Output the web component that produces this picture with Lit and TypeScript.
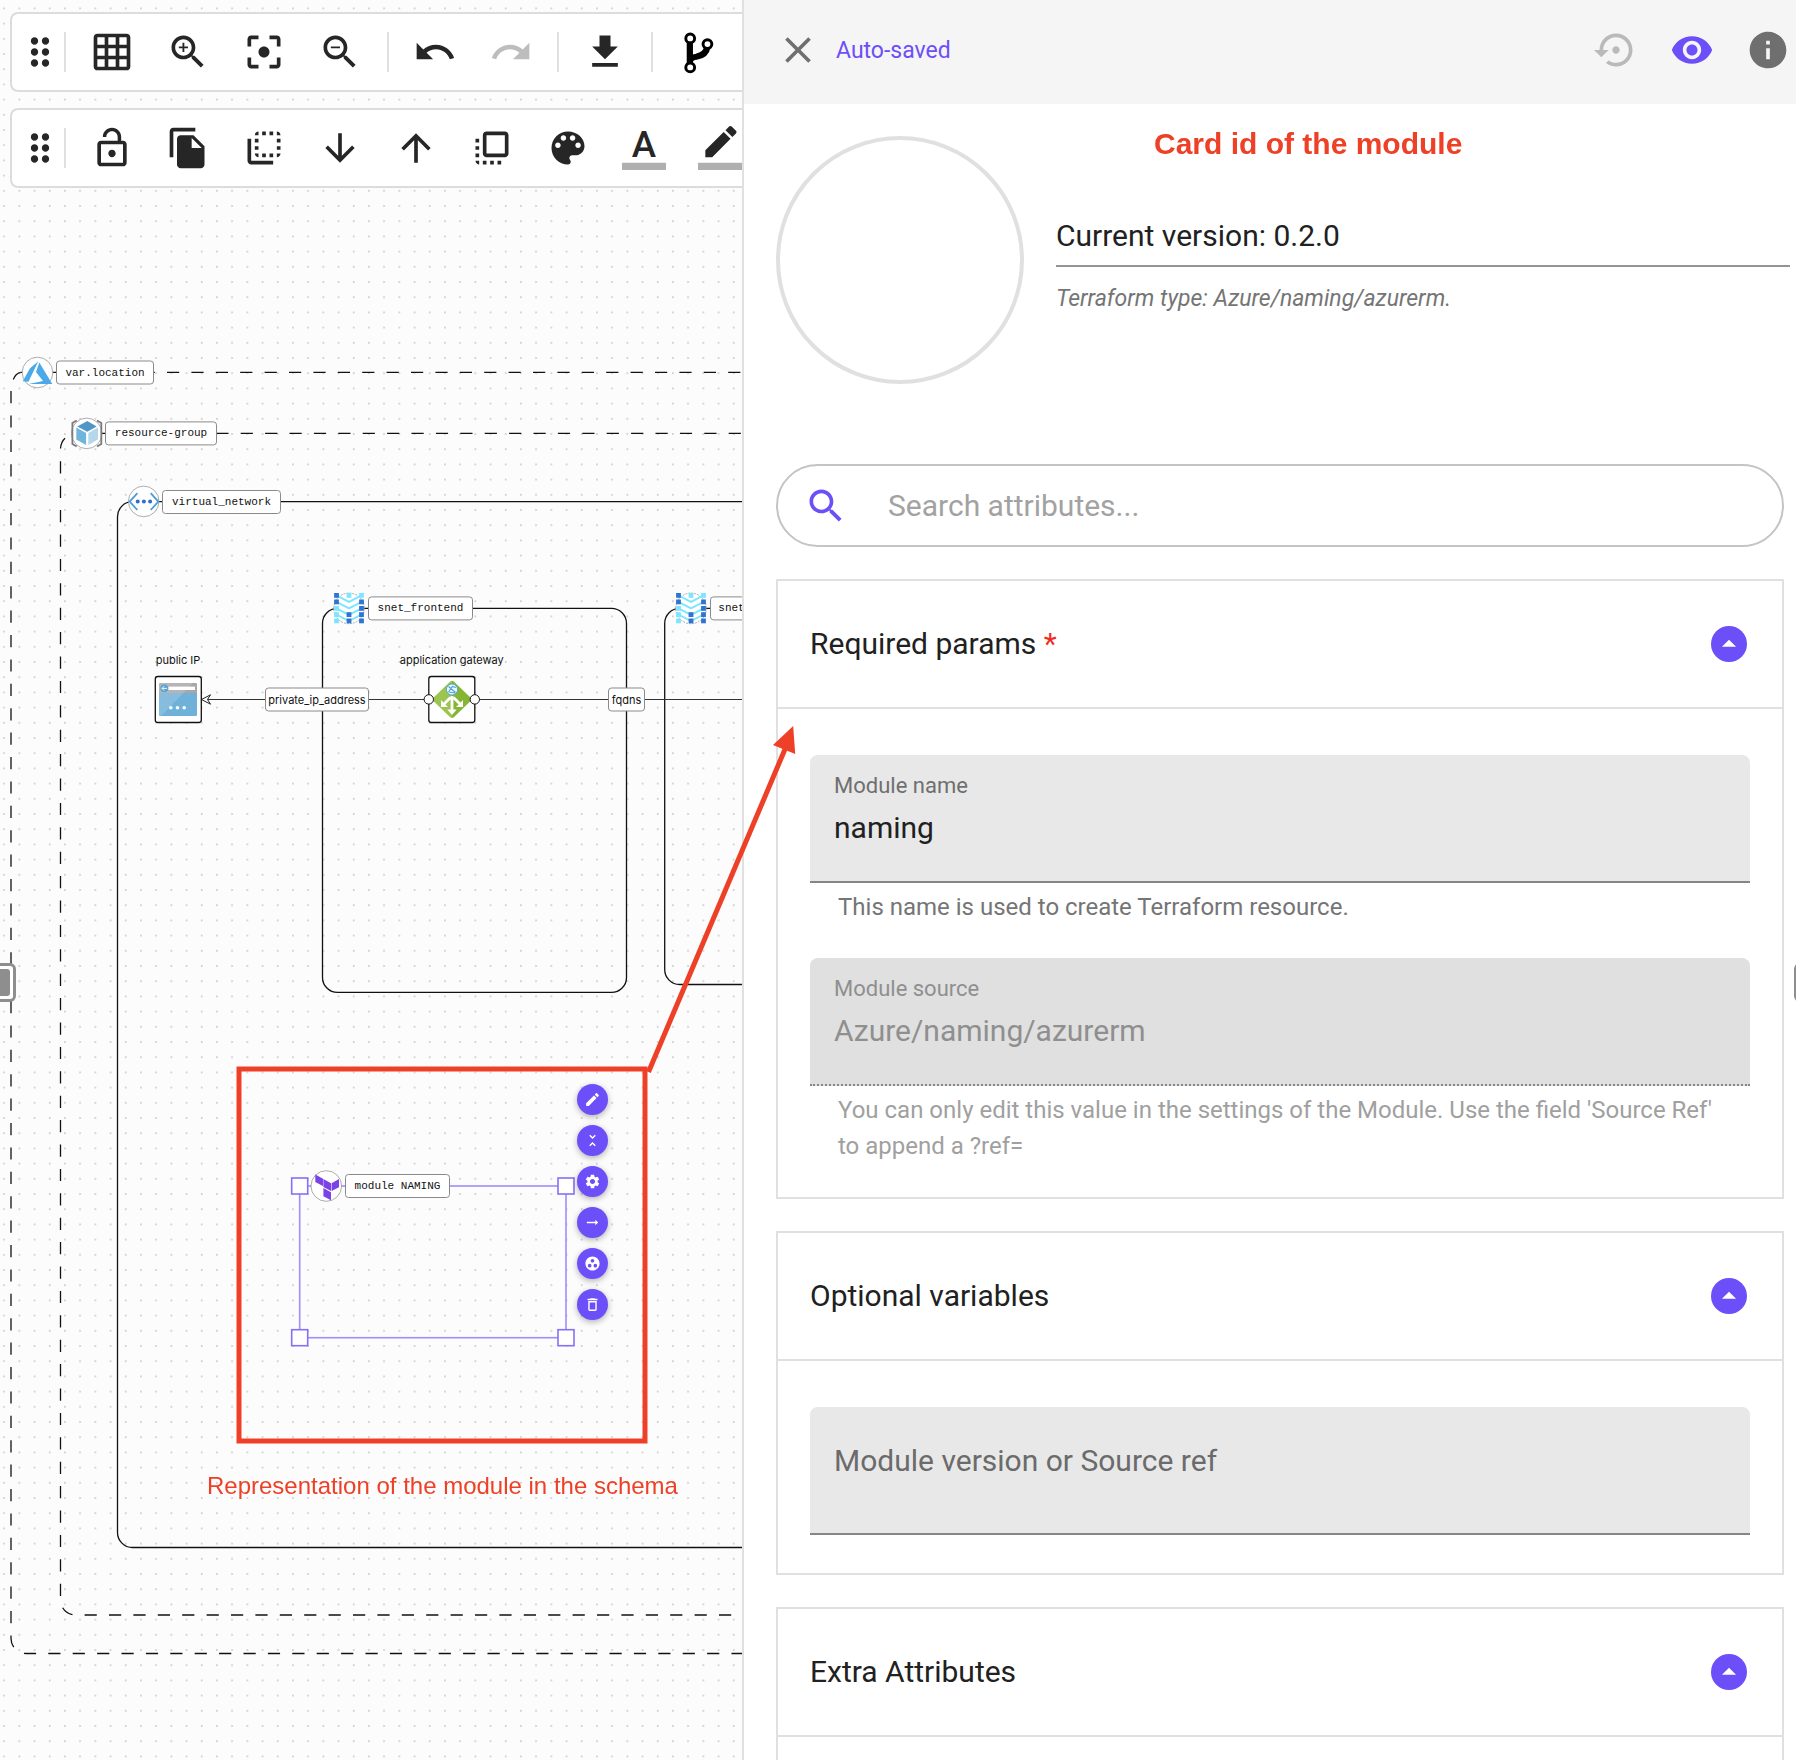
import { LitElement, html, svg, css, nothing } from "lit";
import { customElement, property } from "lit/decorators.js";

const ICONS: Record<string, string> = {
  drag: "M11 18c0 1.1-.9 2-2 2s-2-.9-2-2 .9-2 2-2 2 .9 2 2zm-2-8c-1.1 0-2 .9-2 2s.9 2 2 2 2-.9 2-2-.9-2-2-2zm0-6c-1.1 0-2 .9-2 2s.9 2 2 2 2-.9 2-2-.9-2-2-2zm6 4c1.1 0 2-.9 2-2s-.9-2-2-2-2 .9-2 2 .9 2 2 2zm0 2c-1.1 0-2 .9-2 2s.9 2 2 2 2-.9 2-2-.9-2-2-2zm0 6c-1.1 0-2 .9-2 2s.9 2 2 2 2-.9 2-2-.9-2-2-2z",
  grid: "M20 2H4c-1.1 0-2 .9-2 2v16c0 1.1.9 2 2 2h16c1.1 0 2-.9 2-2V4c0-1.1-.9-2-2-2zM8 20H4v-4h4v4zm0-6H4v-4h4v4zm0-6H4V4h4v4zm6 12h-4v-4h4v4zm0-6h-4v-4h4v4zm0-6h-4V4h4v4zm6 12h-4v-4h4v4zm0-6h-4v-4h4v4zm0-6h-4V4h4v4z",
  search: "M15.5 14h-.79l-.28-.27C15.41 12.59 16 11.11 16 9.5 16 5.91 13.09 3 9.5 3S3 5.91 3 9.5 5.91 16 9.5 16c1.61 0 3.09-.59 4.23-1.57l.27.28v.79l5 4.99L20.49 19l-4.99-5zm-6 0C7.01 14 5 11.99 5 9.5S7.01 5 9.5 5 14 7.01 14 9.5 11.99 14 9.5 14z",
  zoomIn: "M15.5 14h-.79l-.28-.27C15.41 12.59 16 11.11 16 9.5 16 5.91 13.09 3 9.5 3S3 5.91 3 9.5 5.91 16 9.5 16c1.61 0 3.09-.59 4.23-1.57l.27.28v.79l5 4.99L20.49 19l-4.99-5zm-6 0C7.01 14 5 11.99 5 9.5S7.01 5 9.5 5 14 7.01 14 9.5 11.99 14 9.5 14zM12 10h-2v2H9v-2H7V9h2V7h1v2h2v1z",
  zoomOut: "M15.5 14h-.79l-.28-.27C15.41 12.59 16 11.11 16 9.5 16 5.91 13.09 3 9.5 3S3 5.91 3 9.5 5.91 16 9.5 16c1.61 0 3.09-.59 4.23-1.57l.27.28v.79l5 4.99L20.49 19l-4.99-5zm-6 0C7.01 14 5 11.99 5 9.5S7.01 5 9.5 5 14 7.01 14 9.5 11.99 14 9.5 14zM7 9h5v1H7z",
  focus: "M5 15H3v4c0 1.1.9 2 2 2h4v-2H5v-4zM5 5h4V3H5c-1.1 0-2 .9-2 2v4h2V5zm14-2h-4v2h4v4h2V5c0-1.1-.9-2-2-2zm0 16h-4v2h4c1.1 0 2-.9 2-2v-4h-2v4zM12 9c-1.66 0-3 1.34-3 3s1.34 3 3 3 3-1.34 3-3-1.34-3-3-3z",
  undo: "M12.5 8c-2.65 0-5.05.99-6.9 2.6L2 7v9h9l-3.62-3.62c1.39-1.16 3.16-1.88 5.12-1.88 3.54 0 6.55 2.31 7.6 5.5l2.37-.78C21.08 11.03 17.15 8 12.5 8z",
  redo: "M18.4 10.6C16.55 8.99 14.15 8 11.5 8c-4.65 0-8.58 3.03-9.96 7.22L3.9 16c1.05-3.19 4.05-5.5 7.6-5.5 1.95 0 3.73.72 5.12 1.88L13 16h9V7l-3.6 3.6z",
  download: "M19 9h-4V3H9v6H5l7 7 7-7zM5 18v2h14v-2H5z",
  lock: "M12 17c1.1 0 2-.9 2-2s-.9-2-2-2-2 .9-2 2 .9 2 2 2zm6-9h-1V6c0-2.76-2.24-5-5-5S7 3.24 7 6h1.9c0-1.71 1.39-3.1 3.1-3.1 1.71 0 3.1 1.39 3.1 3.1v2H6c-1.1 0-2 .9-2 2v10c0 1.1.9 2 2 2h12c1.1 0 2-.9 2-2V10c0-1.1-.9-2-2-2zm0 12H6V10h12v10z",
  copy: "M16 1H4c-1.1 0-2 .9-2 2v14h2V3h12V1zm-1 4l6 6v10c0 1.1-.9 2-2 2H7.99C6.89 23 6 22.1 6 21l.01-14c0-1.1.89-2 1.99-2h7zm-1 7h5.5L14 6.5V12z",
  toBack: "M9 7H7v2h2V7zm0 4H7v2h2v-2zm0-8c-1.11 0-2 .9-2 2h2V3zm4 12h-2v2h2v-2zm6-12v2h2c0-1.1-.9-2-2-2zm-6 0h-2v2h2V3zM9 17v-2H7c0 1.1.89 2 2 2zm10-4h2v-2h-2v2zm0-4h2V7h-2v2zm0 8c1.1 0 2-.9 2-2h-2v2zM5 7H3v12c0 1.1.89 2 2 2h12v-2H5V7zm10-2h2V3h-2v2zm0 12h2v-2h-2v2z",
  down: "M20 12l-1.41-1.41L13 16.17V4h-2v12.17l-5.58-5.59L4 12l8 8 8-8z",
  up: "M4 12l1.41 1.41L11 7.83V20h2V7.83l5.58 5.59L20 12l-8-8-8 8z",
  toFront: "M3 13h2v-2H3v2zm0 4h2v-2H3v2zm2 4v-2H3c0 1.1.89 2 2 2zM3 9h2V7H3v2zm12 12h2v-2h-2v2zm4-18H9c-1.11 0-2 .9-2 2v10c0 1.1.89 2 2 2h10c1.1 0 2-.9 2-2V5c0-1.1-.9-2-2-2zm0 12H9V5h10v10zm-8 6h2v-2h-2v2zm-4 0h2v-2H7v2z",
  palette: "M12 3c-4.97 0-9 4.03-9 9s4.03 9 9 9c.83 0 1.5-.67 1.5-1.5 0-.39-.15-.74-.39-1.01-.23-.26-.38-.61-.38-.99 0-.83.67-1.5 1.5-1.5H16c2.76 0 5-2.24 5-5 0-4.42-4.03-8-9-8zm-5.5 9c-.83 0-1.5-.67-1.5-1.5S5.67 9 6.5 9 8 9.67 8 10.5 7.33 12 6.5 12zm3-4C8.67 8 8 7.33 8 6.5S8.67 5 9.5 5s1.5.67 1.5 1.5S10.33 8 9.5 8zm5 0c-.83 0-1.5-.67-1.5-1.5S13.67 5 14.5 5s1.5.67 1.5 1.5S15.33 8 14.5 8zm3 4c-.83 0-1.5-.67-1.5-1.5S16.67 9 17.5 9s1.5.67 1.5 1.5-.67 1.5-1.5 1.5z",
  borderColor: "M17.75 7L14 3.25l-10 10V17h3.75l10-10zm2.96-2.96c.39-.39.39-1.02 0-1.41L18.37.29c-.39-.39-1.02-.39-1.41 0L15 2.25 18.75 6l1.96-1.96z",
  close: "M19 6.41L17.59 5 12 10.59 6.41 5 5 6.41 10.59 12 5 17.59 6.41 19 12 13.41 17.59 19 19 17.59 13.41 12z",
  restore: "M14 12c0-1.1-.9-2-2-2s-2 .9-2 2 .9 2 2 2 2-.9 2-2zm-2-9c-4.97 0-9 4.03-9 9H0l4 4 4-4H5c0-3.87 3.13-7 7-7s7 3.13 7 7-3.13 7-7 7c-1.51 0-2.91-.49-4.06-1.3l-1.42 1.44C8.04 20.3 9.94 21 12 21c4.97 0 9-4.03 9-9s-4.03-9-9-9z",
  eye: "M12 4.5C7 4.5 2.73 7.61 1 12c1.73 4.39 6 7.5 11 7.5s9.27-3.11 11-7.5c-1.73-4.39-6-7.5-11-7.5zM12 17c-2.76 0-5-2.24-5-5s2.24-5 5-5 5 2.24 5 5-2.24 5-5 5zm0-8c-1.66 0-3 1.34-3 3s1.34 3 3 3 3-1.34 3-3-1.34-3-3-3z",
  info: "M12 2C6.48 2 2 6.48 2 12s4.48 10 10 10 10-4.48 10-10S17.52 2 12 2zm1 15h-2v-6h2v6zm0-8h-2V7h2v2z",
  edit: "M3 17.25V21h3.75L17.81 9.94l-3.75-3.75L3 17.25zM20.71 7.04c.39-.39.39-1.02 0-1.41l-2.34-2.34c-.39-.39-1.02-.39-1.41 0l-1.83 1.83 3.75 3.75 1.83-1.83z",
  collapse: "M7.41 18.59L8.83 20 12 16.83 15.17 20l1.41-1.41L12 14l-4.59 4.59zm9.18-13.18L15.17 4 12 7.17 8.83 4 7.41 5.41 12 10l4.59-4.59z",
  settings: "M19.14 12.94c.04-.3.06-.61.06-.94 0-.32-.02-.64-.07-.94l2.03-1.58c.18-.14.23-.41.12-.61l-1.92-3.32c-.12-.22-.37-.29-.59-.22l-2.39.96c-.5-.38-1.03-.7-1.62-.94l-.36-2.54c-.04-.24-.24-.41-.48-.41h-3.84c-.24 0-.43.17-.47.41l-.36 2.54c-.59.24-1.13.57-1.62.94l-2.39-.96c-.22-.08-.47 0-.59.22L2.74 8.87c-.12.21-.08.47.12.61l2.03 1.58c-.05.3-.09.63-.09.94s.02.64.07.94l-2.03 1.58c-.18.14-.23.41-.12.61l1.92 3.32c.12.22.37.29.59.22l2.39-.96c.5.38 1.03.7 1.62.94l.36 2.54c.05.24.24.41.48.41h3.84c.24 0 .44-.17.47-.41l.36-2.54c.59-.24 1.13-.56 1.62-.94l2.39.96c.22.08.47 0 .59-.22l1.92-3.32c.12-.22.07-.47-.12-.61l-2.01-1.58zM12 15.6c-1.98 0-3.6-1.62-3.6-3.6s1.62-3.6 3.6-3.6 3.6 1.62 3.6 3.6-1.62 3.6-3.6 3.6z",
  arrowRight: "M16.01 11H4v2h12.01v3L20 12l-3.99-4v3z",
  group: "M12 2C6.48 2 2 6.48 2 12s4.48 10 10 10 10-4.48 10-10S17.52 2 12 2zM8 17.5c-1.38 0-2.5-1.12-2.5-2.5s1.12-2.5 2.5-2.5 2.5 1.12 2.5 2.5-1.12 2.5-2.5 2.5zM9.5 8c0-1.38 1.12-2.5 2.5-2.5s2.5 1.12 2.5 2.5-1.12 2.5-2.5 2.5S9.5 9.38 9.5 8zm6.5 9.5c-1.38 0-2.5-1.12-2.5-2.5s1.12-2.5 2.5-2.5 2.5 1.12 2.5 2.5-1.12 2.5-2.5 2.5z",
  trash: "M6 19c0 1.1.9 2 2 2h8c1.1 0 2-.9 2-2V7H6v12zM8 9h8v10H8V9zm7.5-5l-1-1h-5l-1 1H5v2h14V4z",
  caretUp: "M7 14l5-5 5 5z",
};

const icon = (name: string) => html`<svg class="icon" viewBox="0 0 24 24" aria-hidden="true">
  ${name === "textColor"
    ? svg`<text class="letter" x="12" y="17" text-anchor="middle">A</text>`
    : name === "branch"
      ? svg`<path d="M7 6v13M7 17.5Q7 15 10.5 14.6Q16 13.6 16.6 9" fill="none" stroke="#000" stroke-width="3.4"/>
          <g fill="#fff" stroke="#000" stroke-width="1.6"><circle cx="7.2" cy="4.6" r="2.4"/><circle cx="16.6" cy="7.7" r="2.4"/><circle cx="7.2" cy="20.4" r="2.4"/></g>`
      : svg`<path d=${ICONS[name]}/>`}
  ${name === "textColor" || name === "borderColor" ? svg`<path d="M0 20h24v4H0z" fill="#afafaf"/>` : nothing}
</svg>`;

type Tool = [string, string];

const MAIN_TOOLS: Tool[][] = [
  [["grid", "Toggle grid"], ["zoomIn", "Zoom in"], ["focus", "Fit to screen"], ["zoomOut", "Zoom out"]],
  [["undo", "Undo"], ["redo", "Redo"]],
  [["download", "Download"]],
  [["branch", "Branches"]],
];

const EDIT_TOOLS: Tool[][] = [
  [["lock", "Unlock"], ["copy", "Duplicate"], ["toBack", "Send to back"], ["down", "Send backward"], ["up", "Bring forward"],
   ["toFront", "Bring to front"], ["palette", "Fill colour"], ["textColor", "Text colour"], ["borderColor", "Border colour"]],
];

const NODE_ACTIONS: Tool[] = [
  ["edit", "Edit"], ["collapse", "Collapse"], ["settings", "Settings"],
  ["arrowRight", "Connect"], ["group", "Group"], ["trash", "Delete"],
];

@customElement("tool-bar")
export class ToolBar extends LitElement {
  @property({ attribute: false }) groups: Tool[][] = [];

  static styles = css`
    :host { display: block; }
    .bar { display: flex; align-items: center; box-sizing: border-box; height: 80px; padding-left: 6px; background: #fff; border: 2px solid #dcdcdc; border-right: 0; border-radius: 8px 0 0 8px; }
    .tool { flex: none; width: 44px; height: 44px; padding: 0; border: 0; background: none; color: #262626; }
    .tool:disabled { color: #bdbdbd; }
    .icon { display: block; width: 100%; height: 100%; fill: currentColor; overflow: visible; }
    .letter { font: 500 20px Roboto, sans-serif; }
    .group { display: flex; flex: none; gap: 32px; }
    .sep { flex: none; width: 2px; height: 40px; margin: 0 24px; background: #e0e0e0; }
    .handle + .sep { margin-left: 2px; }
    .group + .sep { margin-left: 25px; margin-right: 24px; }
    .group + .sep ~ .group + .sep { margin-left: 24px; }
  `;

  render() {
    return html`<div class="bar" role="toolbar">
      <button class="tool handle" aria-label="Move toolbar">${icon("drag")}</button>
      ${this.groups.map((g) => html`<span class="sep"></span><div class="group">
        ${g.map(([name, label]) => html`<button class="tool" aria-label=${label} ?disabled=${name === "redo"}>${icon(name)}</button>`)}
      </div>`)}
    </div>`;
  }
}

const badge = (x: number, y: number) =>
  svg`<circle class="badge" cx=${x} cy=${y} r="15.3"/>`;

const tag = (x: number, y: number, w: number, text: string, mono = true) => svg`
  <rect class="tag" x=${x} y=${y - 11.5} width=${w} height="23" rx="3"/>
  <text class=${mono ? "mono" : "sans"} x=${x + w / 2} y=${y + (mono ? 3 : 4)} text-anchor="middle">${text}</text>`;

const subnetIcon = (x: number, y: number) => {
  const cols = [-12.5, 0, 12.5];
  const rows = [-13, -6.5, 0, 6.2, 12.5];
  const dark = ["0,0", "0,1", "1,3", "1,4", "2,1", "2,2", "2,3", "2,4"];
  return svg`<g transform="translate(${x} ${y})">
    <circle class="badge" r="15.3" stroke-dasharray="2 1"/>
    ${rows.slice(0, 4).map((r) => svg`<path d="M-12.5 ${r}L0 ${r + 6.5}L12.5 ${r}" fill="none" stroke="#7de5ff" stroke-width="1.8"/>`)}
    ${cols.map((c, i) => rows.map((r, j) => i === 1 && (j === 1 || j === 2) ? nothing : svg`
      <rect x=${c - 2.4} y=${r - 2.4} width="4.8" height="4.8" fill=${dark.includes(`${i},${j}`) ? "#2f74d0" : "#7de5ff"}/>`))}
  </g>`;
};

@customElement("schema-canvas")
export class SchemaCanvas extends LitElement {
  static styles = css`
    :host { display: block; position: relative; overflow: hidden; background: #fcfcfc; }
    .board { position: absolute; inset: 0; width: 100%; height: 100%; }
    .bars { position: relative; display: flex; flex-direction: column; gap: 16px; padding: 12px 0 0 10px; }
    .edge { fill: none; stroke: #111; stroke-width: 1.3; }
    .dash { stroke-dasharray: 12.2 12.2; }
    .link { fill: none; stroke: #333; stroke-width: 1; }
    .badge { fill: #fff; stroke: #8a8a8a; stroke-width: 0.7; }
    .tag { fill: #fff; stroke: #8a8a8a; stroke-width: 1; }
    .mono { font: 11px "Liberation Mono", monospace; fill: #111; }
    .sans { font: 11px Inter, sans-serif; fill: #111; }
    .node { fill: #fff; stroke: #111; stroke-width: 1.3; }
    .port { fill: #fff; stroke: #111; stroke-width: 1; }
    .select { fill: none; stroke: #9f8cff; stroke-width: 1.6; }
    .grip { fill: #fff; stroke: #8471f5; stroke-width: 1.6; }
    .actions { position: absolute; left: 577px; top: 1084px; display: flex; flex-direction: column; gap: 10px; }
    .action { display: grid; place-items: center; width: 31px; height: 31px; padding: 0; border: 0; border-radius: 50%; background: #6c4ff8; color: #fff; box-shadow: 0 2px 6px rgba(0, 0, 0, 0.3); }
    .action .icon { width: 17px; height: 17px; fill: currentColor; }
    .pull { position: absolute; left: -8px; top: 963px; box-sizing: border-box; width: 24px; height: 39px; padding: 3px; border: 3px solid #8e8e8e; border-radius: 6px; background: #fff; }
    .pull i { display: block; height: 100%; border-radius: 3px; background: #8e8e8e; }
  `;

  render() {
    return html`
      <svg class="board" aria-label="Infrastructure schema">
        <defs>
          <pattern id="dots" width="15.2" height="15.2" patternUnits="userSpaceOnUse" x="-3.4" y="0.8">
            <rect x="6.7" y="6.8" width="1.6" height="1.6" fill="#c6c6c6"/>
          </pattern>
          <linearGradient id="leaf" x1="0" x2="1"><stop offset=".5" stop-color="#9cc54f"/><stop offset=".5" stop-color="#86b534"/></linearGradient>
        </defs>
        <rect width="100%" height="100%" fill="url(#dots)"/>

        <path class="edge dash" d="M20.6 372.4H4000"/>
        <path class="edge" d="M20.6 372.4Q15.5 373.5 13.3 379.5"/>
        <path class="edge dash" d="M11 391V1638.5a15 15 0 0 0 15 15H4000"/>
        ${badge(37.5, 372.5)}
        <path fill="#4ba9e9" d="M38.3 361.2L30 368.3 22.7 381.2 28.5 381.7zM39.3 362.5L52.3 384H28.7L43 381 36 372z"/>
        ${tag(56.5, 372.5, 97, "var.location")}

        <path class="edge dash" d="M94.3 433.4H4000"/>
        <path class="edge" d="M65 438.3Q61 442 60.5 448.5"/>
        <path class="edge dash" d="M60.5 461.3V1600a15 15 0 0 0 15 15H4000"/>
        ${badge(86.7, 433.4)}
        <g transform="translate(86.7 433.4)">
          <path d="M-10 -13L-14.3 -10.4V10.6L-10 13.2M10.3 -13L14.6 -10.4V10.6L10.3 13.2" fill="none" stroke="#7b7b7b" stroke-width="1.8"/>
          <path fill="#4f96c4" d="M.6 -12.4L10 -7 .6 -1.6-9.4 -7z"/>
          <path fill="#6db5db" d="M-10.4 -6L-.6 -.3V11.6L-10.4 6z"/>
          <path fill="#b4d7ea" d="M1.6 -.3L11.3 -6V6L1.6 11.6z"/>
        </g>
        ${tag(105.5, 433.4, 111, "resource-group")}

        <path class="edge" d="M4000 501.7H132.5a15 15 0 0 0 -15 15V1532.5a15 15 0 0 0 15 15H4000"/>
        ${badge(143.7, 501.4)}
        <g transform="translate(143.7 501.6)">
          <path d="M-6.3 -8.4L-14 0L-6.3 8.4M7 -8.4L14.6 0L7 8.4" fill="none" stroke="#4b9cd8" stroke-width="1.8"/>
          <g fill="#2d6fd0"><circle cx="-6" r="2"/><circle cx=".2" r="2"/><circle cx="6.4" r="2"/></g>
        </g>
        ${tag(162.5, 502, 118, "virtual_network")}

        <rect class="edge" x="322.5" y="608.4" width="304" height="384" rx="15"/>
        ${subnetIcon(349, 608.4)}
        ${tag(368.5, 608.4, 104, "snet_frontend")}
        <path class="edge" d="M4000 608.4H679.7a15 15 0 0 0 -15 15V969.5a15 15 0 0 0 15 15H4000"/>
        ${subnetIcon(691, 608.4)}
        ${tag(710.5, 608.4, 42, "snet")}

        <path class="link" d="M207 699.5H429M475 699.5H4000"/>
        <path d="M201.5 699.5L210.5 694.8L207.5 699.5L210.5 704.2z" fill="#fff" stroke="#222" stroke-width="1"/>
        ${tag(265.5, 699.5, 103, "private_ip_address", false)}
        ${tag(608.5, 699.5, 36, "fqdns", false)}

        <text class="sans" x="178" y="664" text-anchor="middle">public IP</text>
        <rect class="node" x="155.3" y="676.5" width="46" height="46" rx="2.5"/>
        <rect x="159" y="683" width="38" height="33" rx="1.5" fill="#6fb1d8"/>
        <path d="M159 693v-8.5q0-1.5 1.5-1.5h35q1.5 0 1.5 1.5v8.5z" fill="#a7a7a7"/>
        <path d="M159 714V683H193L161 716z" fill="#fff" opacity=".16"/>
        <rect x="168.5" y="686.6" width="26.5" height="3.4" fill="#fff"/>
        <circle cx="164.3" cy="688.4" r="3.8" fill="#57a4d4"/>
        <path d="M167 688.4h-5m2.2-2.2l-2.2 2.2 2.2 2.2" fill="none" stroke="#fff" stroke-width=".9"/>
        <g fill="#fff"><circle cx="170.8" cy="707.7" r="1.8"/><circle cx="177.5" cy="707.7" r="1.8"/><circle cx="184.2" cy="707.7" r="1.8"/></g>

        <text class="sans" x="451.7" y="664" text-anchor="middle">application gateway</text>
        <rect class="node" x="428.8" y="676.5" width="46" height="46" rx="2.5"/>
        <path d="M450.2 681.5q1.8-1.6 3.6 0L470.4 697.6q1.6 1.8 0 3.6L453.8 717.3q-1.8 1.6-3.6 0L433.6 701.2q-1.6-1.8 0-3.6z" fill="url(#leaf)"/>
        <circle cx="452" cy="689.5" r="5.6" fill="#eef7fb" stroke="#4fa3cf" stroke-width="1"/>
        <path d="M448.5 686.5l7 6M448.5 692l4-5.5 3.5 1M448.5 692l6.5 1" fill="none" stroke="#4fa3cf" stroke-width="1.2"/>
        <path d="M452 696v15M450.5 697.5l-7 7M453.5 697.5l7 7" fill="none" stroke="#fff" stroke-width="2.8"/>
        <path d="M447.3 709.5h9.4l-4.7 5.5zM441 700v7h7zM463 700v7h-7z" fill="#fff"/>
        <circle class="port" cx="428.8" cy="699.4" r="4.7"/><circle class="port" cx="474.8" cy="699.4" r="4.7"/>

        <rect class="select" x="299.7" y="1186" width="266.3" height="151.7"/>
        ${[[299.7, 1186], [566, 1186], [299.7, 1337.7], [566, 1337.7]].map(([x, y]) => svg`<rect class="grip" x=${x - 8} y=${y - 8} width="16" height="16"/>`)}
        ${badge(326.3, 1186)}
        <path transform="translate(326.3 1186)" fill="#7b42e6" d="M-11 -11.4L-3.3 -7.3V0L-11 -4zM-2.9 -7L4.7 -2.7V5L-2.9 1zM5.3 -2.7L12.7 -7V1.3L5.3 5zM-2.9 2L4.7 6.3V14.3L-2.9 10.3z"/>
        ${tag(345.5, 1186, 104, "module NAMING")}
      </svg>
      <div class="actions">
        ${NODE_ACTIONS.map(([name, label]) => html`<button class="action" aria-label=${label}>${icon(name)}</button>`)}
      </div>
      <div class="pull"><i></i></div>
      <div class="bars">
        <tool-bar .groups=${MAIN_TOOLS}></tool-bar>
        <tool-bar .groups=${EDIT_TOOLS}></tool-bar>
      </div>`;
  }
}

@customElement("module-panel")
export class ModulePanel extends LitElement {
  static styles = css`
    :host { display: block; position: relative; box-sizing: border-box; overflow: auto; scrollbar-width: none; background: #fff; border-left: 2px solid #e0e0e0; font-family: Roboto, sans-serif; color: #212121; }
    input, button, h2, p { margin: 0; padding: 0; font: inherit; color: inherit; }
    button { border: 0; background: none; }
    input { display: block; width: 100%; box-sizing: border-box; border: 0; outline: 0; background: none; }
    .icon { display: block; width: 44px; height: 44px; fill: currentColor; }
    .head { display: flex; align-items: center; height: 104px; padding: 0 6px 4px 32px; box-sizing: border-box; background: #f5f5f5; color: #6f6f6f; }
    .status { flex: 1; margin-left: 16px; padding-top: 2px; font-size: 23px; line-height: 24px; color: #6c4ff8; }
    .tools { display: flex; gap: 32px; }
    .violet { color: #6c4ff8; }
    .muted:disabled { color: #bababa; }
    .profile { display: flex; gap: 32px; padding: 32px 6px 80px 32px; }
    .avatar { flex: none; box-sizing: border-box; width: 248px; height: 248px; border: 4px solid #e0e0e0; border-radius: 50%; }
    .about { flex: 1; padding-top: 81px; }
    .version { height: 50px; padding-bottom: 12px; border-bottom: 2px solid #949494; font-size: 30px; line-height: 36px; }
    .type { padding-top: 14px; font-size: 23px; line-height: 36px; font-style: italic; color: #757575; }
    .form { display: flex; flex-direction: column; gap: 32px; padding: 0 12px 32px 32px; }
    .search { display: flex; align-items: center; gap: 40px; box-sizing: border-box; height: 83px; padding: 0 26px; border: 2px solid #c4c4c4; border-radius: 42px; font-size: 30px; line-height: 36px; }
    .search .icon { flex: none; color: #6c4ff8; }
    .search input::placeholder { color: #a2a2a2; opacity: 1; }
    .card { border: 2px solid #e0e0e0; }
    .title { display: flex; align-items: center; justify-content: space-between; height: 126px; padding: 0 35px 0 32px; border-bottom: 2px solid #e0e0e0; font-size: 30px; font-weight: 400; line-height: 36px; }
    .star { color: #f02c20; }
    .toggle { display: grid; place-items: center; width: 36px; height: 36px; border-radius: 50%; background: #6c4ff8; color: #fff; }
    .toggle .icon { width: 34px; height: 34px; }
    .body { display: flex; flex-direction: column; gap: 33px; padding: 46px 32px 33px; }
    .box { display: block; box-sizing: border-box; height: 128px; padding: 19px 24px 0; border-bottom: 2px solid #868686; border-radius: 8px 8px 0 0; background: #e8e8e8; font-size: 30px; line-height: 36px; }
    .box label { display: block; margin-bottom: 12px; font-size: 22px; line-height: 24px; color: #6f6f6f; }
    .box input { height: 36px; }
    .box input::placeholder { color: #6b6b6b; opacity: 1; }
    .off { background: #e0e0e0; border-bottom-style: dotted; }
    .off label, .off input:disabled { color: #8f8f8f; }
    .bare { padding-top: 36px; margin-bottom: 5px; }
    .hint { padding: 6px 28px 0; font-size: 24px; line-height: 36px; color: #757575; }
    .off + .hint { color: #a0a0a0; }
  `;

  private heading(text: string, required = false) {
    return html`<h2 class="title"><span>${text}${required ? html` <span class="star">*</span>` : nothing}</span>
      <button class="toggle" aria-label="Collapse ${text}" aria-expanded="true">${icon("caretUp")}</button></h2>`;
  }

  render() {
    return html`
      <header class="head">
        <button aria-label="Close">${icon("close")}</button>
        <span class="status">Auto-saved</span>
        <div class="tools">
          <button class="muted" aria-label="Restore" disabled>${icon("restore")}</button>
          <button class="violet" aria-label="Preview">${icon("eye")}</button>
          <button aria-label="Information">${icon("info")}</button>
        </div>
      </header>
      <div class="profile">
        <div class="avatar"></div>
        <div class="about">
          <input class="version" aria-label="Version" .value=${"Current version: 0.2.0"} />
          <p class="type">Terraform type: Azure/naming/azurerm.</p>
        </div>
      </div>
      <div class="form">
        <div class="search">${icon("search")}<input type="text" aria-label="Search attributes" placeholder="Search attributes..." /></div>
        <section class="card">
          ${this.heading("Required params", true)}
          <div class="body">
            <div>
              <div class="box"><label for="name">Module name</label><input id="name" .value=${"naming"} /></div>
              <p class="hint">This name is used to create Terraform resource.</p>
            </div>
            <div>
              <div class="box off"><label for="source">Module source</label><input id="source" disabled .value=${"Azure/naming/azurerm"} /></div>
              <p class="hint">You can only edit this value in the settings of the Module. Use the field 'Source Ref' to append a ?ref=</p>
            </div>
          </div>
        </section>
        <section class="card">
          ${this.heading("Optional variables")}
          <div class="body">
            <div class="box bare"><input aria-label="Module version or Source ref" placeholder="Module version or Source ref" /></div>
          </div>
        </section>
        <section class="card">
          ${this.heading("Extra Attributes")}
          <div class="body"></div>
        </section>
      </div>`;
  }
}

@customElement("app-root")
export class AppRoot extends LitElement {
  static styles = css`
    :host { display: grid; grid-template-columns: minmax(0, 742fr) minmax(0, 1054fr); position: relative; height: 100vh; overflow: hidden; }
    .notes { position: absolute; inset: 0; width: 100%; height: 100%; pointer-events: none; }
    .frame { fill: none; stroke: #ee4026; stroke-width: 5; }
    .note { font: 24px "Liberation Sans", Arial, sans-serif; fill: #ee4026; }
    .strong { font-size: 30px; font-weight: 700; }
    .pull { position: absolute; right: -12px; top: 963px; width: 14px; height: 39px; border-radius: 6px; background: #8e8e8e; }
  `;

  render() {
    return html`
      <schema-canvas></schema-canvas>
      <module-panel></module-panel>
      <div class="pull"></div>
      <svg class="notes">
        <rect class="frame" x="239" y="1069" width="406" height="372"/>
        <path class="frame" d="M648.5 1072L785.5 748"/>
        <path d="M793.2 726L773 745L795.2 754z" fill="#ee4026"/>
        <text class="note" x="207" y="1494">Representation of the module in the schema</text>
        <text class="note strong" x="1154" y="154">Card id of the module</text>
      </svg>`;
  }
}
